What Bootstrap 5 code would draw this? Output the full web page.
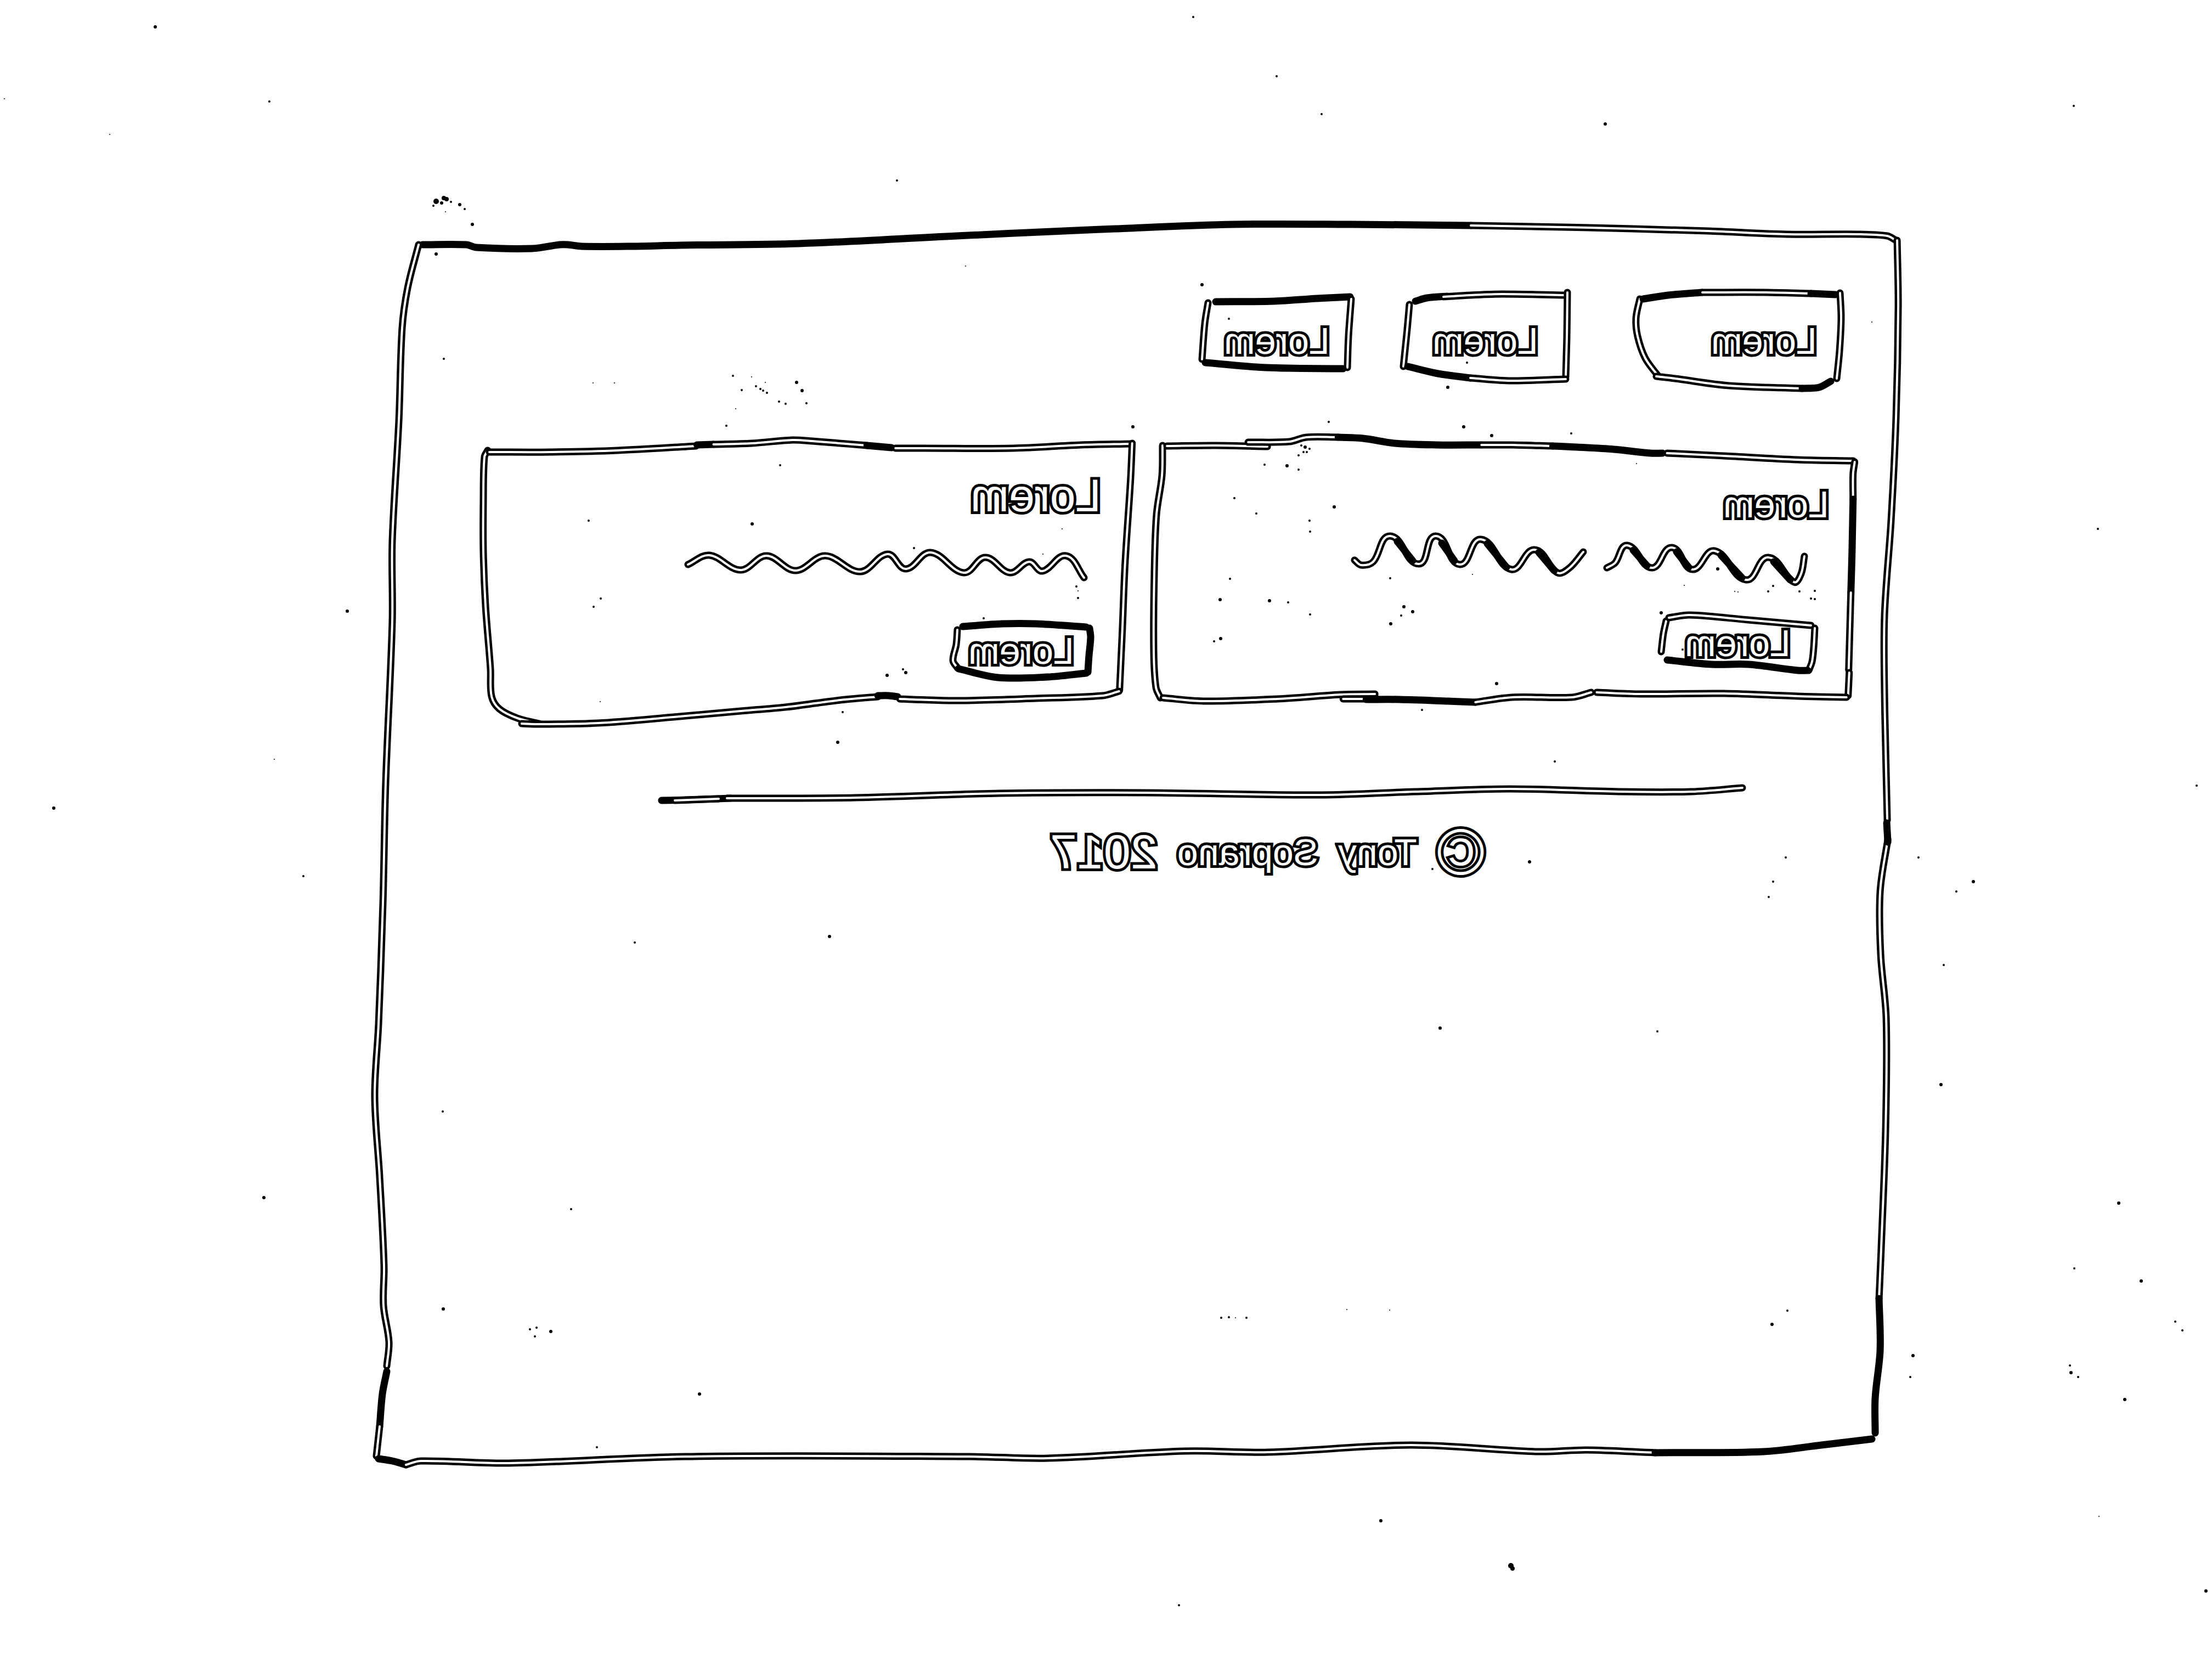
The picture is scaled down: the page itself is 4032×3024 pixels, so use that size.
<!DOCTYPE html>
<html lang="en">
<head>
<meta charset="utf-8">
<meta name="viewport" content="width=device-width, initial-scale=1">
<title>Lorem</title>
<link href="https://cdn.jsdelivr.net/npm/bootstrap@5.3.0/dist/css/bootstrap.min.css" rel="stylesheet">
<style>
  body { background: #fff; color: #000; font-family: "Liberation Sans", Arial, sans-serif; }
  .sheet { width: 69%; min-height: 75vh; margin: 13.5vh 14% 0 17%; }
  /* hand-drawn outlines laid over their box */
  .ink { position: absolute; inset: 0; width: 100%; height: 100%; overflow: visible; pointer-events: none; }
  .ink path, .doodle path { fill: none; stroke: #000; stroke-width: 13px; stroke-linecap: round; stroke-linejoin: round; }
  .ink path.core, .doodle path.core { stroke: #fff; stroke-width: 4px; }
  .doodle { display: block; overflow: visible; }
  /* everything is written right to left, mirrored, as an outline */
  .pen { display: inline-block; transform: scaleX(-1); color: #fff; -webkit-text-stroke: 10px #000; paint-order: stroke fill; white-space: nowrap; }
  .sk-btn { position: relative; border: 0; background: transparent; padding: 0; font-size: 68px; line-height: 80px; text-decoration: none; }
  .sk-nav { padding: 119px 108px 74px 0; gap: 82px; }
  .sk-nav .sk-btn { height: 188px; }
  .nav-a { width: 414px; padding-right: 48px; }
  .nav-b { width: 313px; }
  .nav-c { width: 283px; }
  .sk-cards { padding: 0 82px 0 185px; gap: 22px; }
  .sk-card { position: relative; flex: 0 1 51.4%; padding: 76px 52px 96px 24px; }
  .sk-card.second { flex-basis: 47.7%; padding-top: 60px; padding-right: 64px; padding-bottom: 85px; }
  .sk-title { font-size: 68px; line-height: 108px; font-weight: 400; margin: 0; }
  .second .sk-title { font-size: 84px; }
  .wave-a { width: 828px; height: 96px; margin: 0 38px 47px 0; }
  .wave-b { width: 735px; height: 110px; margin: 0 24px 64px 0; }
  .act-a { width: 293px; height: 112px; margin-right: 20px; }
  .act-b { width: 263px; height: 110px; margin-right: 14px; }
  .rule { width: 1988px; max-width: 100%; height: 54px; margin: 94px 283px 20px auto; }
  .sk-foot { padding-right: 762px; gap: 36px; font-size: 68px; line-height: 118px; }
  .sk-foot .copy { font-size: 118px; }
  .sk-foot .year { font-size: 88px; }
</style>
<script src="https://cdn.jsdelivr.net/npm/bootstrap@5.3.0/dist/js/bootstrap.bundle.min.js"></script>
</head>
<body class="position-relative overflow-hidden min-vh-100">

<main class="sheet position-relative d-flow-root">
  <svg class="ink" viewBox="685 408 2782 2268" preserveAspectRatio="none" aria-hidden="true">
    <g data-solid="770,446 850,446 868,451 970,453 1020,446 1035,446 1060,449 1150,449 1240,447 1456,444 1744,430 2033,417 2249,409 2465,409 2681,411"></g>
    <g data-hollow="2681,411 2897,415 3113,421 3257,427 3387,427 3440,430 3454,437"></g>
    <g data-hollow="3458,438 3460,558 3456,760 3447,948 3435,1121 3435,1265 3440,1495"></g>
    <g data-hollow="3441,1530 3427,1625 3428,1740 3438,1856 3437,2057 3429,2274 3425,2367"></g>
    <g data-solid="3439,1500 3441,1535"></g>
    <g data-solid="3425,2367 3427,2461 3418,2548 3418,2612"></g>
    <g data-hollow="763,446 743,525 733,598 727,767 715,987 715,1133 703,1427 698,1647 690,1867 683,1999 692,2145 700,2307 699,2380 709,2446 705,2490"></g>
    <g data-solid="705,2500 697,2541 692,2600"></g>
    <g data-hollow="692,2600 686,2654"></g>
    <g data-solid="690,2659 715,2663 740,2670"></g>
    <g data-hollow="740,2670 767,2663 928,2667 1249,2655 1767,2655 1910,2658 2160,2645 2312,2647 2571,2634 2803,2646 2892,2643 3017,2648"></g>
    <g data-solid="3017,2648 3214,2646 3320,2634 3412,2623"></g>
  </svg>

  <nav class="sk-nav d-flex flex-row-reverse align-items-start position-relative">
    <a href="#" class="sk-btn nav-a d-flex align-items-center justify-content-end">
      <svg class="ink" viewBox="2945 527 414 188" preserveAspectRatio="none" aria-hidden="true">
        <g data-hollow="2988,545 2981,580 2984,613 2998,653 3022,686"></g>
        <g data-solid="2994,545 3040,538 3102,533"></g>
        <g data-hollow="3102,533 3218,533 3300,535"></g>
        <g data-solid="3300,535 3345,537"></g>
        <g data-hollow="3353,534 3355,580 3352,640 3347,690"></g>
        <g data-hollow="3018,686 3052,690 3151,703 3284,708"></g>
        <g data-solid="3284,708 3315,706 3336,695"></g>
      </svg>
      <span class="pen">Lorem</span>
    </a>
    <a href="#" class="sk-btn nav-b d-flex align-items-center justify-content-center">
      <svg class="ink" viewBox="2550 527 313 188" preserveAspectRatio="none" aria-hidden="true">
        <g data-hollow="2568,555 2564,600 2557,668"></g>
        <g data-solid="2579,549 2600,543 2637,540"></g>
        <g data-hollow="2630,541 2680,538 2737,536 2853,538"></g>
        <g data-hollow="2856,533 2855,613 2853,687"></g>
        <g data-solid="2565,668 2620,681 2679,689"></g>
        <g data-hollow="2679,689 2753,694 2853,691"></g>
      </svg>
      <span class="pen">Lorem</span>
    </a>
    <a href="#" class="sk-btn nav-c d-flex align-items-center justify-content-center">
      <svg class="ink" viewBox="2185 527 283 188" preserveAspectRatio="none" aria-hidden="true">
        <g data-hollow="2201,552 2195,590 2190,655"></g>
        <g data-solid="2215,550 2322,549 2400,544 2460,541"></g>
        <g data-hollow="2462,545 2457,613 2455,670"></g>
        <g data-solid="2196,661 2306,670 2447,672"></g>
      </svg>
      <span class="pen">Lorem</span>
    </a>
  </nav>

  <section class="sk-cards d-flex flex-row-reverse align-items-stretch">
    <article class="sk-card d-flex flex-column align-items-end">
      <svg class="ink" viewBox="2093 789 1292 537" preserveAspectRatio="none" aria-hidden="true">
        <g data-hollow="2119,812 2118,867 2108,938 2104,1046 2103,1188 2107,1253 2115,1272"></g>
        <g data-hollow="2127,813 2216,812 2310,814"></g>
        <g data-hollow="2275,806 2350,805 2381,797 2439,797"></g>
        <g data-solid="2439,797 2484,799 2542,808 2618,811 2700,811"></g>
        <g data-hollow="2700,811 2756,811 2830,813"></g>
        <g data-solid="2830,813 2874,815 2941,819 3008,826 3030,826"></g>
        <g data-hollow="3038,826 3142,831 3276,838 3377,840"></g>
        <g data-hollow="3380,842 3377,864 3377,910"></g>
        <g data-solid="3377,910 3375,1010 3373,1080"></g>
        <g data-hollow="3373,1080 3369,1221"></g>
        <g data-hollow="3370,1226 3368,1268"></g>
        <g data-hollow="2120,1272 2194,1278 2328,1274 2444,1266 2506,1265"></g>
        <g data-hollow="2448,1274 2510,1274"></g>
        <g data-solid="2490,1275 2551,1275 2640,1278 2689,1280"></g>
        <g data-hollow="2689,1280 2756,1271 2865,1271 2900,1262"></g>
        <g data-hollow="2910,1262 2990,1265 3142,1264 3276,1269 3365,1271"></g>
      </svg>
      <h2 class="sk-title"><span class="pen">Lorem</span></h2>
      <svg class="doodle wave-a" viewBox="2467 973 828 96" role="img" aria-label="text line">
        <g data-hollow="2468,1021 2480,1030 2502,1024 2533,977 2585,1028 2616,977 2660,1029 2698,983 2754,1038 2796,1002 2838,1044 2860,1035 2885,1006"></g>
        <g data-hollow="2928,1035 2943,1026 2965,994 3010,1035 3046,998 3084,1038 3124,1004 3182,1057 3222,1016 3269,1061 3282,1046 3288,1014"></g>
        <g data-solid="2546,987 2574,1022"></g>
        <g data-solid="2627,990 2650,1022"></g>
        <g data-solid="2710,991 2745,1034"></g>
        <g data-solid="2804,1007 2832,1040"></g>
        <g data-solid="2976,1003 3001,1031"></g>
        <g data-solid="3055,1006 3077,1034"></g>
        <g data-solid="3136,1012 3174,1053"></g>
        <g data-solid="3232,1024 3262,1057"></g>
      </svg>
      <button type="button" class="sk-btn act-a">
        <svg class="ink" viewBox="3020 1116 293 112" preserveAspectRatio="none" aria-hidden="true">
          <g data-hollow="3036,1132 3031,1155 3027,1188"></g>
          <g data-hollow="3041,1126 3079,1121 3186,1130 3300,1140"></g>
          <g data-hollow="3307,1145 3305,1180 3302,1206 3296,1222"></g>
          <g data-solid="3038,1203 3119,1211 3186,1211 3276,1222 3294,1222"></g>
        </svg>
        <span class="pen">Lorem</span>
      </button>
    </article>

    <article class="sk-card second d-flex flex-column align-items-end">
      <svg class="ink" viewBox="870 789 1201 537" preserveAspectRatio="none" aria-hidden="true">
        <g data-hollow="888,821 882,833 880,913 880,1005 884,1104 893,1219 895,1269 909,1292 942,1309 982,1319"></g>
        <g data-hollow="891,824 1003,824 1125,821 1268,813"></g>
        <g data-solid="1270,811 1300,810"></g>
        <g data-hollow="1300,810 1370,808 1444,802 1480,804 1580,812"></g>
        <g data-solid="1580,812 1625,816"></g>
        <g data-hollow="1632,817 1684,817 1847,817 1970,811 2062,809"></g>
        <g data-hollow="2064,808 2061,875 2051,1028 2046,1150 2041,1258"></g>
        <g data-hollow="950,1319 982,1320 1089,1318 1227,1307 1350,1296 1431,1289 1500,1280 1541,1275 1600,1270"></g>
        <g data-solid="1600,1268 1620,1268 1636,1270"></g>
        <g data-hollow="1640,1274 1664,1275 1745,1277 1888,1273 2010,1268 2040,1260"></g>
      </svg>
      <h2 class="sk-title"><span class="pen">Lorem</span></h2>
      <svg class="doodle wave-b" viewBox="1248 957 735 110" role="img" aria-label="text line">
        <g data-hollow="1254,1029 1293,1012 1350,1039 1397,1013 1450,1040 1504,1013 1568,1042 1618,1010 1651,1037 1696,1007 1757,1044 1796,1016 1841,1044 1876,1024 1900,1041 1943,1013 1976,1053"></g>
      </svg>
      <button type="button" class="sk-btn act-b">
        <svg class="ink" viewBox="1730 1131 263 110" preserveAspectRatio="none" aria-hidden="true">
          <g data-hollow="1745,1148 1743,1175 1737,1204 1745,1217"></g>
          <g data-solid="1755,1142 1827,1137 1888,1137 1980,1143"></g>
          <g data-solid="1986,1145 1988,1162 1985,1195 1983,1225"></g>
          <g data-solid="1747,1219 1819,1235 1909,1234 1980,1227"></g>
        </svg>
        <span class="pen">Lorem</span>
      </button>
    </article>
  </section>

  <svg class="doodle rule" viewBox="1197 1420 1988 54" role="separator">
    <g data-solid="1206,1459 1250,1458 1332,1455"></g>
    <g data-hollow="1325,1455 1558,1454 1823,1446 2089,1445 2407,1449 2580,1443 2752,1438 2951,1443 3083,1443 3176,1436"></g>
    <g data-hollow="1230,1459 1310,1456"></g>
  </svg>

  <footer class="sk-foot d-flex flex-row-reverse align-items-center">
    <span class="pen copy">©</span>
    <span class="pen">Tony</span>
    <span class="pen">Soprano</span>
    <span class="pen year">2017</span>
  </footer>
</main>

<svg class="ink" id="specks" viewBox="0 0 4032 3024" preserveAspectRatio="none" aria-hidden="true"></svg>

<script>
  const NS = 'http://www.w3.org/2000/svg';
  // Turns "x,y x,y ..." into a smooth curve through all the points.
  function curve(text) {
    const p = text.trim().split(/\s+/).map(s => s.split(',').map(Number));
    let d = 'M' + p[0];
    for (let i = 0; i < p.length - 1; i++) {
      const a = p[i - 1] || p[i], b = p[i], c = p[i + 1], e = p[i + 2] || c;
      // tangents are limited to a share of the segment so that uneven spacing does not overshoot
      const len = Math.hypot(c[0] - b[0], c[1] - b[1]);
      const tan = (u, v) => {
        const n = Math.hypot(v[0] - u[0], v[1] - u[1]) || 1;
        return [(v[0] - u[0]) / n * len / 3, (v[1] - u[1]) / n * len / 3];
      };
      const t1 = tan(a, c), t2 = tan(b, e);
      d += `C${b[0] + t1[0]},${b[1] + t1[1]} ${c[0] - t2[0]},${c[1] - t2[1]} ${c}`;
    }
    return d;
  }
  function add(g, d, cls) {
    const el = document.createElementNS(NS, 'path');
    el.setAttribute('d', d);
    if (cls) el.setAttribute('class', cls);
    g.appendChild(el);
  }
  document.querySelectorAll('[data-solid]').forEach(g => add(g, curve(g.dataset.solid)));
  document.querySelectorAll('[data-hollow]').forEach(g => {
    const d = curve(g.dataset.hollow);
    add(g, d);
    add(g, d, 'core');
  });

  // Ink specks scattered on the paper: x, y, radius.
  const specks = [
    [283,49,3],[2754,2854,5],[2757,2859,4],[2926,226,3],[491,185,2],[2327,139,2],[2175,31,2],[2409,208,2],[3780,193,2],[1635,329,2],
    [3824,964,2],[633,1114,3],[98,1473,3],[553,1597,2],[1527,1353,3],[2834,1388,2],[1512,1707,3],[1157,1718,2],[2625,1874,3],[3021,1880,2],
    [3538,1977,3],[3543,1759,2],[3566,1625,2],[3597,1607,3],[3497,1563,2],[3255,1563,2],[3232,1607,2],[3224,1635,2],[4004,1432,2],[481,2183,3],
    [807,2026,2],[808,2386,3],[1041,2204,2],[1275,2541,3],[1088,2638,2],[966,2423,2],[978,2420,2],[1004,2427,3],[975,2436,2],[3230,2414,3],
    [3258,2389,2],[3487,2471,3],[3482,2510,2],[3862,2193,3],[3903,2335,3],[3965,2409,2],[3978,2425,2],[3781,2312,2],[3773,2489,2],[3775,2502,3],
    [3788,2510,2],[3873,2551,3],[2517,2772,3],[2149,2926,2],[4021,2900,3],[3826,2764,1],[795,367,5],[809,361,4],[814,363,4],[805,370,3],
    [790,375,2],[822,368,2],[838,373,3],[847,381,2],[861,409,3],[795,463,3],[809,654,2],[812,386,1],[1081,698,1],[1120,698,1],
    [1336,685,2],[1370,687,1],[1378,704,2],[1352,711,2],[1386,709,2],[1391,712,2],[1398,716,2],[1395,697,1],[1452,697,3],[1462,712,3],
    [1420,732,2],[1432,736,2],[1470,735,2],[1324,776,2],[1341,745,1],[1760,485,1],[3412,587,1],[2191,519,3],[2240,581,2],[2674,661,2],
    [2422,769,2],[2668,778,3],[2719,794,3],[2639,706,3],[2065,778,3],[2864,790,2],[2372,812,2],[2379,815,3],[2387,818,2],[2376,824,2],
    [2382,824,2],[2367,830,2],[2346,849,3],[2367,856,2],[2305,847,2],[2250,908,2],[2290,936,2],[2432,924,3],[2387,949,2],[2388,969,2],
    [2242,1055,2],[2224,1093,3],[2314,1095,3],[2348,1098,2],[2388,1120,2],[2534,1054,2],[2559,1106,3],[2575,1115,3],[2554,1122,2],[2535,1137,3],
    [2225,1164,3],[2213,1169,2],[2684,1047,1],[2728,1246,3],[2592,1294,2],[2983,845,1],[3131,1037,3],[3070,1067,1],[3232,1068,2],[3223,1078,2],
    [3280,1078,2],[3308,1077,2],[3301,1091,2],[3308,1092,2],[3162,1078,1],[3168,1079,1],[3028,1117,3],[3067,1184,2],[1073,949,2],[1371,955,3],
    [1422,848,2],[1095,1091,2],[1082,1106,2],[1094,1279,1],[1617,1231,3],[1646,1220,2],[1651,1226,3],[1536,1298,2],[1793,1127,2],[1666,999,2],
    [1962,1069,2],[1965,1077,1],[1965,1090,2],[1936,964,1],[1901,1010,1],[2226,2402,2],[2240,2401,2],[2252,2402,1],[2272,2402,2],[2455,2387,1],
    [2533,2388,1],[500,1384,1],[200,245,1],[8,180,1],[2788,1571,3],[2611,1584,2]
  ];
  const board = document.getElementById('specks');
  for (const [x, y, r] of specks) {
    const c = document.createElementNS(NS, 'circle');
    c.setAttribute('cx', x); c.setAttribute('cy', y); c.setAttribute('r', r);
    board.appendChild(c);
  }
</script>
</body>
</html>
